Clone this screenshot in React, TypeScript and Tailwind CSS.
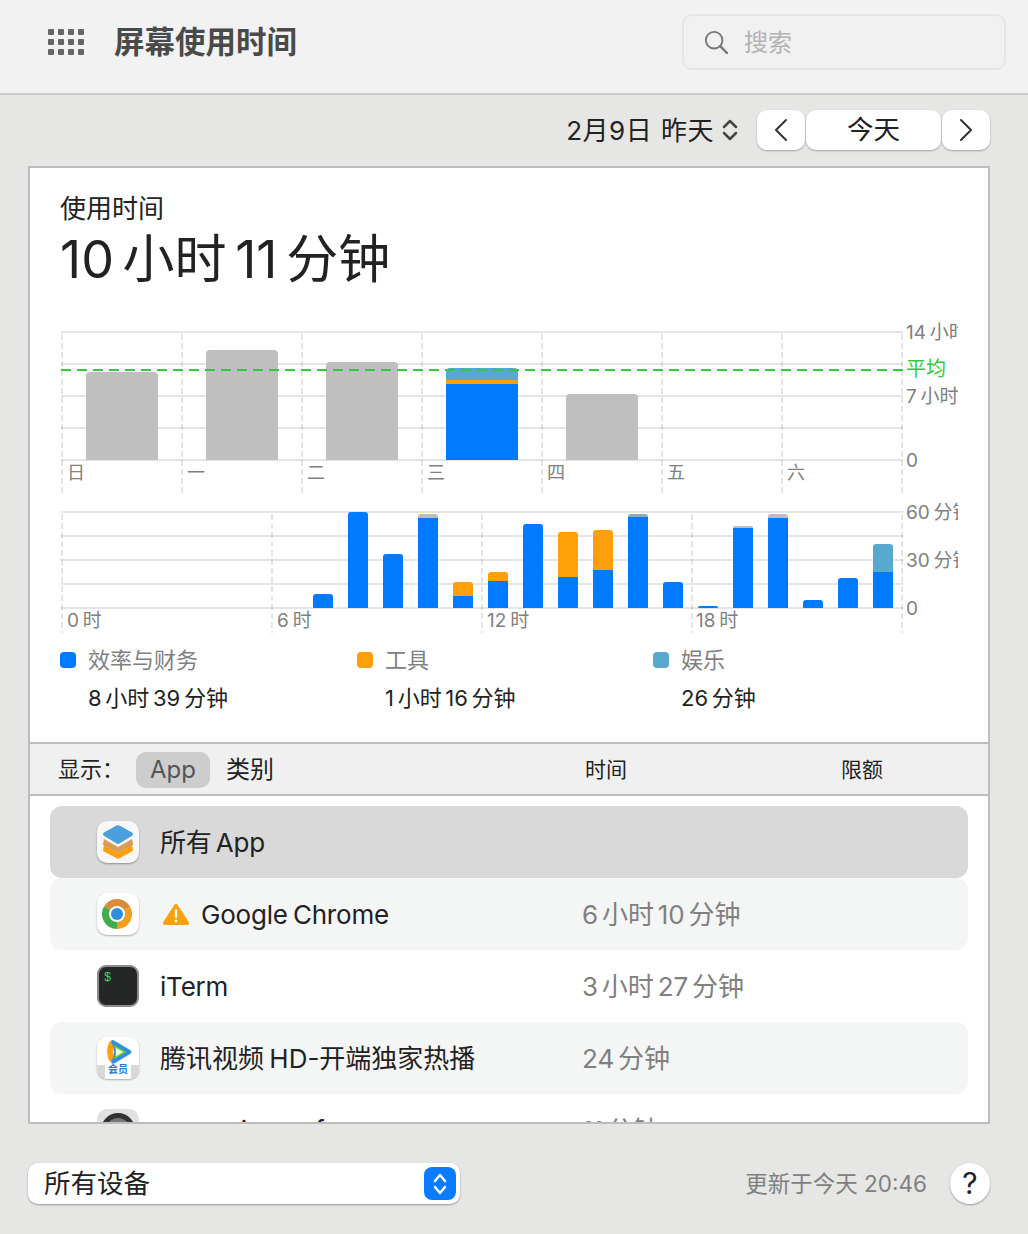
const hourBars: { x: number; top: number; segs: [number, string][] }[] = [
  { x: 313, top: 594, segs: [[608, "#007aff"]] },
  { x: 348, top: 512, segs: [[608, "#007aff"]] },
  { x: 383, top: 554, segs: [[608, "#007aff"]] },
  { x: 418, top: 514, segs: [[608, "#007aff"], [518, "#bdbdbd"]] },
  { x: 453, top: 582, segs: [[608, "#007aff"], [596, "#ff9f0a"]] },
  { x: 488, top: 572, segs: [[608, "#007aff"], [581, "#ff9f0a"]] },
  { x: 523, top: 524, segs: [[608, "#007aff"]] },
  { x: 558, top: 532, segs: [[608, "#007aff"], [577, "#ff9f0a"]] },
  { x: 593, top: 530, segs: [[608, "#007aff"], [570, "#ff9f0a"]] },
  { x: 628, top: 514, segs: [[608, "#007aff"], [517, "#8fa9b5"]] },
  { x: 663, top: 582, segs: [[608, "#007aff"]] },
  { x: 698, top: 606, segs: [[608, "#007aff"]] },
  { x: 733, top: 526, segs: [[608, "#007aff"], [528, "#bdbdbd"]] },
  { x: 768, top: 514, segs: [[608, "#007aff"], [518, "#bdbdbd"]] },
  { x: 803, top: 600, segs: [[608, "#007aff"]] },
  { x: 838, top: 578, segs: [[608, "#007aff"]] },
  { x: 873, top: 544, segs: [[608, "#007aff"], [572, "#59a9cf"]] },
];

// top-rounded bar: from y=top down to y=bottom
function barPath(x: number, w: number, top: number, bottom: number, r: number) {
  const rr = Math.min(r, bottom - top);
  return `M${x} ${bottom}V${top + rr}Q${x} ${top} ${x + rr} ${top}H${x + w - rr}Q${x + w} ${top} ${x + w} ${top + rr}V${bottom}Z`;
}

function Grid({ ys, xs, x2, yTop, yBottom }: { ys: number[]; xs: number[]; x2: number; yTop: number; yBottom: number }) {
  return (
    <g>
      {ys.map((y) => (
        <line key={y} x1={61} x2={x2} y1={y} y2={y} stroke="#000" strokeOpacity={0.1} strokeWidth={2} />
      ))}
      {xs.map((x) => (
        <line key={x} x1={x} x2={x} y1={yTop} y2={yBottom} stroke="#000" strokeOpacity={0.1} strokeWidth={2} strokeDasharray="6 3" />
      ))}
    </g>
  );
}

function WeekChart() {
  const days = ["日", "一", "二", "三", "四", "五", "六"];
  const xs = [62, 182, 302, 422, 542, 662, 782, 902];
  const gray = [
    { x: 86, top: 372 },
    { x: 206, top: 350 },
    { x: 326, top: 362 },
    { x: 566, top: 394 },
  ];
  return (
    <svg width={898} height={180} viewBox="60 320 898 180" className="block [word-spacing:-1.5px]">
      <Grid ys={[332, 364, 396, 428, 460]} xs={xs} x2={903} yTop={334} yBottom={493} />
      {gray.map((b) => (
        <path key={b.x} d={barPath(b.x, 72, b.top, 460, 4)} fill="#bfbfbf" />
      ))}
      <rect x={446} y={384} width={72} height={76} fill="#007aff" />
      <rect x={446} y={380} width={72} height={4} fill="#ff9f0a" />
      <path d={barPath(446, 72, 368, 380, 4)} fill="#59a9cf" />
      <line x1={61} x2={905} y1={370} y2={370} stroke="#32c840" strokeWidth={2} strokeDasharray="10 6" />
      {days.map((d, i) => (
        <text key={d} x={67 + i * 120} y={479} fontSize={18} fill="#808080">{d}</text>
      ))}
      <text x={906} y={339} fontSize={19} fill="#808080">14 小时</text>
      <text x={906} y={376} fontSize={20} fill="#32c840">平均</text>
      <text x={906} y={403} fontSize={19} fill="#808080">7 小时</text>
      <text x={906} y={467} fontSize={19} fill="#808080">0</text>
    </svg>
  );
}

function HourChart() {
  return (
    <svg width={898} height={140} viewBox="60 500 898 140" className="block [word-spacing:-1.5px]">
      <Grid ys={[512, 536, 560, 584, 608]} xs={[62, 272, 482, 692, 902]} x2={903} yTop={514} yBottom={633} />
      {hourBars.map((b) => (
        <g key={b.x}>
          {b.segs.map(([bottom, color], i) => {
            const next = b.segs[i + 1];
            return next ? (
              <rect key={i} x={b.x} y={next[0]} width={20} height={bottom - next[0]} fill={color} />
            ) : (
              <path key={i} d={barPath(b.x, 20, b.top, bottom, 3)} fill={color} />
            );
          })}
        </g>
      ))}
      <text x={67} y={627} fontSize={19} fill="#808080">0 时</text>
      <text x={277} y={627} fontSize={19} fill="#808080">6 时</text>
      <text x={487} y={627} fontSize={19} fill="#808080">12 时</text>
      <text x={696} y={627} fontSize={19} fill="#808080">18 时</text>
      <text x={906} y={519} fontSize={19} fill="#808080">60 分钟</text>
      <text x={906} y={567} fontSize={19} fill="#808080">30 分钟</text>
      <text x={906} y={615} fontSize={19} fill="#808080">0</text>
    </svg>
  );
}

function AllAppsIcon() {
  return (
    <div className="w-[42px] h-[42px] shrink-0 rounded-[10px] bg-[#f7f7f7] shadow-[0_1px_2px_rgba(0,0,0,0.35)]">
      <svg width={42} height={42} viewBox="0 0 42 42">
        <path d="M7 24 21 32 35 24 36 29Q36 30 35 30.5L21 38 7 30.5Q6 30 6 29Z" fill="#ff9f0a" />
        <path d="M7 18 21 26 35 18 36 23Q36 24 35 24.5L21 32 7 24.5Q6 24 6 23Z" fill="#d79c55" />
        <path d="M19.5 4.5Q21 3.8 22.5 4.5L35 11.5Q37 13 35 14.8L22.5 22.5Q21 23.3 19.5 22.5L7 14.8Q5 13 7 11.5Z" fill="#4a9fdc" />
      </svg>
    </div>
  );
}

function ChromeIcon() {
  return (
    <div className="w-[42px] h-[42px] shrink-0 rounded-[10px] bg-white shadow-[0_1px_2px_rgba(0,0,0,0.3)]">
      <svg width={42} height={42} viewBox="0 0 42 42">
        <path d="M20 21 7 13.5A15 15 0 0 1 33 13.5Z" fill="#d98a3a" />
        <path d="M20 21 33 13.5A15 15 0 0 1 20 36Z" fill="#f39c1f" />
        <path d="M20 21 20 36A15 15 0 0 1 7 13.5Z" fill="#3fae4a" />
        <circle cx={20} cy={21} r={8} fill="#fff" />
        <circle cx={20} cy={21} r={6} fill="#2f8ee0" />
      </svg>
    </div>
  );
}

function ItermIcon() {
  return (
    <div className="w-[42px] h-[42px] shrink-0 rounded-[9px] bg-[#252727] border-2 border-[#8c8c8c] px-[5px] font-['Liberation_Mono',monospace] text-[12px] leading-[22px] text-[#3ddc5a]">
      $
    </div>
  );
}

function TencentIcon() {
  return (
    <div className="w-[42px] h-[42px] shrink-0 rounded-[10px] bg-white shadow-[0_1px_2px_rgba(0,0,0,0.3)] overflow-hidden relative">
      <svg width={42} height={42} viewBox="0 0 42 42">
        <path d="M0 28 8 28 8 42 3 42 0 38Z" fill="#d8d8d8" />
        <path d="M42 28 34 28 34 42 39 42 42 38Z" fill="#d8d8d8" />
        <path d="M13 4Q7 14 13 25L18 22Q14 14 18 6Z" fill="#ff9f0a" />
        <path d="M14 4Q15 2 18 4L33 13Q36 15 33 17L18 26Q15 28 14 25Q20 15 14 4Z" fill="#2f8ee0" />
        <path d="M17 8 29 15 17 22Q20 15 17 8Z" fill="#7ed321" />
        <path d="M19 11 26 15 19 19Z" fill="#fff" />
      </svg>
      <span className="absolute left-0 right-0 top-[26px] text-center text-[10px] leading-[12px] font-bold text-[#1a7fe0]">会员</span>
    </div>
  );
}

function GearIcon() {
  return (
    <div className="w-[42px] h-[42px] shrink-0 rounded-[10px] bg-[#dfe1e3] flex items-center justify-center">
      <div className="w-[34px] h-[34px] rounded-full border-[5px] border-[#333] bg-[#777]" />
    </div>
  );
}

function WarningIcon() {
  return (
    <svg width={26} height={23} viewBox="0 0 26 23" className="shrink-0 ml-[3px]">
      <path d="M13 3 24 20H2Z" fill="#ff9f0a" stroke="#ff9f0a" strokeWidth={4} strokeLinejoin="round" />
      <rect x={11.8} y={6} width={2.4} height={9} rx={1.2} fill="#fff" />
      <circle cx={13} cy={18} r={1.4} fill="#fff" />
    </svg>
  );
}

function Row({ icon, name, time, bg }: { icon: React.ReactNode; name: React.ReactNode; time?: string; bg?: string }) {
  return (
    <div className={`h-[72px] shrink-0 rounded-[12px] flex items-center pl-[47px] ${bg ?? ""}`}>
      {icon}
      <div className="w-[422px] ml-[21px] flex items-center text-[26px] text-[#222] [word-spacing:-2px]">{name}</div>
      <div className="text-[26px] text-[#808080] [word-spacing:-3.5px]">{time}</div>
    </div>
  );
}

function Legend({ color, label, value }: { color: string; label: string; value: string }) {
  return (
    <div>
      <div className="flex items-center gap-[12px] h-[28px]">
        <div className={`w-[16px] h-[16px] rounded-[4px] ${color}`} />
        <span className="text-[22px] text-[#808080]">{label}</span>
      </div>
      <div className="pl-[28px] mt-[10px] text-[22px] leading-[28px] text-[#222] [word-spacing:-2.5px]">{value}</div>
    </div>
  );
}

export default function App() {
  return (
    <div className="w-[1028px] h-[1234px] overflow-hidden bg-[#e6e6e5] font-['Inter','Noto_Sans_CJK_SC',sans-serif]">
      {/* title bar */}
      <div className="h-[95px] bg-[#f2f2f2] border-b-2 border-[#c9c9c9] flex items-center pl-[48px] pr-[22px] pb-[10px]">
        <div className="grid grid-cols-4 gap-[4px] w-[36px]">
          {Array.from({ length: 12 }).map((_, i) => (
            <div key={i} className="w-[6px] h-[6px] rounded-[1px] bg-[#666]" />
          ))}
        </div>
        <div className="ml-[30px] text-[30.5px] font-bold text-[#4a4a4a]">屏幕使用时间</div>
        <div className="ml-auto w-[324px] h-[56px] rounded-[10px] border-2 border-[#e6e6e6] bg-[#f1f1f1] flex items-center pl-[20px]">
          <svg width={24} height={24} viewBox="0 0 26 26" fill="none" stroke="#777" strokeWidth={2}>
            <circle cx={11} cy={11} r={9} />
            <path d="M17.5 17.5 25 25" strokeLinecap="round" strokeWidth={2.5} />
          </svg>
          <span className="ml-[16px] text-[24px] text-[#b3b3b3] translate-y-[1px]">搜索</span>
        </div>
      </div>

      {/* date toolbar */}
      <div className="h-[71px] flex items-start justify-end pt-[15px] pr-[38px]">
        <div className="h-[40px] flex items-center text-[26px] text-[#222] tracking-[0.5px] [word-spacing:1px]">
          2月9日 昨天
          <svg width={16} height={24} viewBox="0 0 16 24" fill="none" stroke="#444" strokeWidth={2.5} strokeLinecap="round" strokeLinejoin="round" className="ml-[8px]">
            <path d="M2 9 8 3 14 9M2 15 8 21 14 15" />
          </svg>
        </div>
        <div className="ml-[19px] flex gap-[1px]">
          <button className="w-[48px] h-[40px] rounded-[10px] bg-white shadow-[0_1px_2px_rgba(0,0,0,0.3)] flex items-center justify-center">
            <svg width={14} height={24} viewBox="0 0 14 24" fill="none" stroke="#333" strokeWidth={2} strokeLinecap="round" strokeLinejoin="round"><path d="M12 2 2 12 12 22" /></svg>
          </button>
          <button className="w-[135px] h-[40px] rounded-[10px] bg-white shadow-[0_1px_2px_rgba(0,0,0,0.3)] text-[26.5px] text-[#222]">今天</button>
          <button className="w-[48px] h-[40px] rounded-[10px] bg-white shadow-[0_1px_2px_rgba(0,0,0,0.3)] flex items-center justify-center">
            <svg width={14} height={24} viewBox="0 0 14 24" fill="none" stroke="#333" strokeWidth={2} strokeLinecap="round" strokeLinejoin="round"><path d="M2 2 12 12 2 22" /></svg>
          </button>
        </div>
      </div>

      {/* main panel */}
      <div className="ml-[28px] w-[962px] h-[958px] border-2 border-[#bdbdbd] bg-white flex flex-col overflow-hidden">
        <div className="h-[574px] shrink-0 pl-[30px] pt-[23px]">
          <div className="text-[26px] leading-[36px] text-[#222]">使用时间</div>
          <div className="mt-[1px] text-[52px] leading-[64px] text-[#222] [word-spacing:-6px]">10 小时 11 分钟</div>
          <div className="mt-[28px]">
            <WeekChart />
            <HourChart />
          </div>
          <div className="mt-[6px] grid grid-cols-[297px_296px_296px]">
            <Legend color="bg-[#007aff]" label="效率与财务" value="8 小时 39 分钟" />
            <Legend color="bg-[#ff9f0a]" label="工具" value="1 小时 16 分钟" />
            <Legend color="bg-[#59a9cf]" label="娱乐" value="26 分钟" />
          </div>
        </div>

        <div className="h-[54px] shrink-0 border-y-2 border-[#bdbdbd] bg-[#f0f0f0] grid grid-cols-[555px_256px_1fr] items-center pt-[1px]">
          <div className="pl-[28px] flex items-center">
            <span className="w-[78px] text-[22px] text-[#222]">显示：</span>
            <span className="w-[74px] h-[36px] rounded-[10px] bg-[#cdcdcd] flex items-center justify-center text-[24px] text-[#555]">App</span>
            <span className="ml-[16px] text-[24px] text-[#222]">类别</span>
          </div>
          <span className="text-[21px] text-[#222]">时间</span>
          <span className="text-[21px] text-[#222]">限额</span>
        </div>

        <div className="flex-1 min-h-0 overflow-hidden pt-[10px] px-[20px] flex flex-col">
          <Row icon={<AllAppsIcon />} name={<span className="tracking-[-0.2px] [word-spacing:-3px]">所有 App</span>} bg="bg-[#d9d9d9]" />
          <Row
            icon={<ChromeIcon />}
            name={
              <>
                <WarningIcon />
                <span className="ml-[12px] tracking-[-0.2px]">Google Chrome</span>
              </>
            }
            time="6 小时 10 分钟"
            bg="bg-[#f4f5f5]"
          />
          <Row icon={<ItermIcon />} name={<span className="tracking-[-0.2px]">iTerm</span>} time="3 小时 27 分钟" />
          <Row icon={<TencentIcon />} name="腾讯视频 HD-开端独家热播" time="24 分钟" bg="bg-[#f4f5f5]" />
          <Row icon={<GearIcon />} name={<span className="tracking-[-0.2px]">seameiocursf</span>} time="11 分钟" />
        </div>
      </div>

      {/* footer */}
      <div className="pt-[39px] pl-[28px] pr-[38px] flex items-center">
        <div className="w-[432px] h-[41px] rounded-[10px] bg-white shadow-[0_1px_2px_rgba(0,0,0,0.35)] flex items-center pl-[16px] pr-[4px] text-[26.5px] text-[#222]">
          所有设备
          <div className="ml-auto w-[32px] h-[33px] rounded-[8px] bg-[#0a7cff] flex items-center justify-center">
            <svg width={16} height={26} viewBox="0 0 16 26" fill="none" stroke="#fff" strokeWidth={2.5} strokeLinecap="round" strokeLinejoin="round">
              <path d="M3 10 8 4 13 10M3 16 8 22 13 16" />
            </svg>
          </div>
        </div>
        <span className="ml-auto text-[22.5px] text-[#808080]">更新于今天 20:46</span>
        <div className="ml-[23px] w-[40px] h-[41px] rounded-full bg-white shadow-[0_1px_2px_rgba(0,0,0,0.35)] flex items-center justify-center text-[30px] text-[#222]">?</div>
      </div>
    </div>
  );
}
